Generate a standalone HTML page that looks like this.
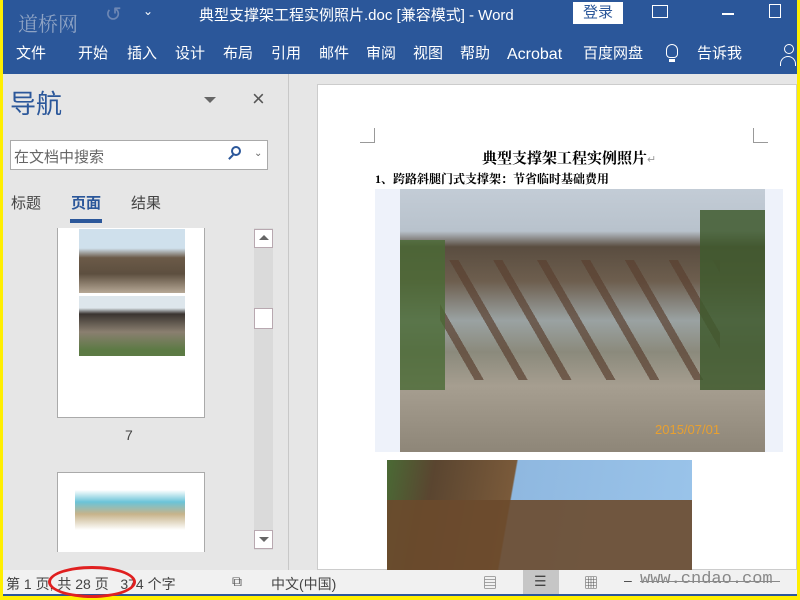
<!DOCTYPE html>
<html><head><meta charset="utf-8"><style>
*{margin:0;padding:0;box-sizing:border-box}
body{width:800px;height:600px;position:relative;overflow:hidden;background:#ffef00;font-family:"Liberation Sans","Noto Sans CJK SC",sans-serif}
.a{position:absolute}
.w{color:#fff}
.t{position:absolute;top:44px;height:20px;line-height:20px;font-size:15px;color:#fff}
</style></head><body>
<div class="a" style="left:3px;top:0;width:794px;height:74px;background:#2b579a"></div>
<div class="a w" style="left:18px;top:8px;font-size:20px;color:#8ea3c4;font-family:'Noto Serif CJK SC',serif">道桥网</div>
<div class="a w" style="left:105px;top:2px;font-size:20px;color:#6d87b4">↺</div>
<div class="a w" style="left:143px;top:4px;font-size:12px">⌄</div>
<div class="a w" style="left:199px;top:4px;font-size:15px">典型支撑架工程实例照片.doc [兼容模式]  -  Word</div>
<div class="a" style="left:573px;top:2px;width:50px;height:22px;background:#fff;color:#2b579a;font-size:15px;text-align:center;line-height:22px">登录</div>
<div class="a" style="left:652px;top:5px;width:16px;height:13px;border:1.5px solid #fff"></div>
<div class="a" style="left:722px;top:13px;width:12px;height:1.5px;background:#fff"></div>
<div class="a" style="left:769px;top:4px;width:12px;height:14px;border:1.5px solid #fff"></div>
<div class="t" style="left:16px">文件</div>
<div class="t" style="left:78px">开始</div>
<div class="t" style="left:127px">插入</div>
<div class="t" style="left:175px">设计</div>
<div class="t" style="left:223px">布局</div>
<div class="t" style="left:271px">引用</div>
<div class="t" style="left:319px">邮件</div>
<div class="t" style="left:366px">审阅</div>
<div class="t" style="left:413px">视图</div>
<div class="t" style="left:460px">帮助</div>
<div class="t" style="left:507px;top:45px;font-size:16px">Acrobat</div>
<div class="t" style="left:583px">百度网盘</div>
<div class="a" style="left:666px;top:44px;width:12px;height:14px;border:1.5px solid #fff;border-radius:6px 6px 4px 4px"></div>
<div class="a" style="left:669px;top:59px;width:6px;height:3px;background:#fff"></div>
<div class="t" style="left:697px">告诉我</div>
<div class="a" style="left:784px;top:44px;width:10px;height:10px;border:1.5px solid #fff;border-radius:50%"></div>
<div class="a" style="left:780px;top:56px;width:16px;height:10px;border:1.5px solid #fff;border-bottom:none;border-radius:8px 8px 0 0"></div>
<!-- main -->
<div class="a" style="left:3px;top:74px;width:794px;height:496px;background:#e6e6e6"></div>
<div class="a" style="left:288px;top:74px;width:1px;height:496px;background:#c8c8c8"></div>
<div class="a" style="left:10px;top:84px;font-size:26px;color:#2b579a">导航</div>
<div class="a" style="left:204px;top:97px;border-left:6px solid transparent;border-right:6px solid transparent;border-top:6px solid #666"></div>
<div class="a" style="left:252px;top:86px;font-size:22px;color:#555">×</div>
<div class="a" style="left:10px;top:140px;width:258px;height:30px;background:#fff;border:1px solid #aaa"></div>
<div class="a" style="left:14px;top:146px;font-size:15px;color:#666">在文档中搜索</div>
<div class="a" style="left:231px;top:146px;width:10px;height:10px;border:2px solid #2b579a;border-radius:50%"></div>
<div class="a" style="left:228px;top:156px;width:6px;height:2px;background:#2b579a;transform:rotate(-45deg)"></div>
<div class="a" style="left:254px;top:148px;font-size:10px;color:#666">⌄</div>
<div class="a" style="left:11px;top:192px;font-size:15px;color:#444">标题</div>
<div class="a" style="left:71px;top:192px;font-size:15px;color:#2b579a;font-weight:bold">页面</div>
<div class="a" style="left:70px;top:219px;width:32px;height:4px;background:#2b579a"></div>
<div class="a" style="left:131px;top:192px;font-size:15px;color:#444">结果</div>
<div class="a" style="left:57px;top:228px;width:148px;height:190px;background:#fff;border:1px solid #aaa;border-top:none"></div>
<div class="a" style="left:79px;top:229px;width:106px;height:64px;background:linear-gradient(#cfe0ec 0,#cfe0ec 30%,#6b5a48 45%,#5d4f3f 70%,#b6a896 100%)"></div>
<div class="a" style="left:79px;top:296px;width:106px;height:60px;background:linear-gradient(#dde6ec 0,#dde6ec 20%,#3a3430 30%,#8a7f70 60%,#5c7a44 90%)"></div>
<div class="a" style="left:125px;top:427px;font-size:14px;color:#444">7</div>
<div class="a" style="left:57px;top:472px;width:148px;height:80px;background:#fff;border:1px solid #aaa;border-bottom:none"></div>
<div class="a" style="left:75px;top:490px;width:110px;height:40px;background:linear-gradient(#fff 0,#6bc4d8 30%,#c7b38a 60%,#fff 100%)"></div>
<div class="a" style="left:254px;top:228px;width:19px;height:322px;background:#dadada"></div>
<div class="a" style="left:254px;top:229px;width:19px;height:19px;background:#fff;border:1px solid #b8a8b0"></div>
<div class="a" style="left:259px;top:235px;border-left:5px solid transparent;border-right:5px solid transparent;border-bottom:5px solid #666"></div>
<div class="a" style="left:254px;top:308px;width:19px;height:21px;background:#fff;border:1px solid #b8a8b0"></div>
<div class="a" style="left:254px;top:530px;width:19px;height:19px;background:#fff;border:1px solid #b8a8b0"></div>
<div class="a" style="left:259px;top:537px;border-left:5px solid transparent;border-right:5px solid transparent;border-top:5px solid #666"></div>
<!-- page -->
<div class="a" style="left:317px;top:84px;width:480px;height:486px;background:#fff;border:1px solid #ccc"></div>
<div class="a" style="left:360px;top:128px;width:15px;height:15px;border-right:1px solid #999;border-bottom:1px solid #999"></div>
<div class="a" style="left:753px;top:128px;width:15px;height:15px;border-left:1px solid #999;border-bottom:1px solid #999"></div>
<div class="a" style="left:482px;top:147px;font-size:15px;font-weight:bold;color:#000;font-family:'Liberation Serif','Noto Serif CJK SC',serif">典型支撑架工程实例照片<span style="color:#999;font-weight:normal;font-size:11px">↵</span></div>
<div class="a" style="left:375px;top:170px;font-size:12px;font-weight:bold;color:#000;font-family:'Liberation Serif','Noto Serif CJK SC',serif">1、跨路斜腿门式支撑架：节省临时基础费用</div>
<div class="a" style="left:375px;top:189px;width:408px;height:263px;background:#eef2fa"></div>
<div class="a" style="left:400px;top:189px;width:365px;height:263px;background:linear-gradient(#c3ccd6 0,#b8c2cc 16%,#5a4d40 22%,#6d5e4e 35%,#9aa2a2 50%,#8b8a7c 62%,#a69e90 75%,#8e8678 100%)"></div>
<div class="a" style="left:440px;top:260px;width:280px;height:120px;background:repeating-linear-gradient(60deg,transparent 0 30px,#5a4030 30px 38px);opacity:.7"></div>
<div class="a" style="left:700px;top:210px;width:65px;height:180px;background:#3f5a2e;opacity:.85"></div>
<div class="a" style="left:400px;top:240px;width:45px;height:150px;background:#4a6a35;opacity:.8"></div>
<div class="a" style="left:655px;top:422px;font-size:13px;color:#e8a030">2015/07/01</div>
<div class="a" style="left:387px;top:460px;width:305px;height:110px;background:linear-gradient(100deg,#4a6a35 0,#5a4530 15%,#7a5a3a 40%,#8fb8e0 40.5%,#9ac4ea 100%)"></div>
<div class="a" style="left:387px;top:500px;width:305px;height:70px;background:#6b4a2c;opacity:.9"></div>
<!-- status -->
<div class="a" style="left:3px;top:570px;width:794px;height:24px;background:#f1f1f1"></div>
<div class="a" style="left:3px;top:594px;width:794px;height:2px;background:#2b579a"></div>
<div class="a" style="left:6px;top:574px;font-size:14px;color:#444;white-space:pre">第 1 页, 共 28 页   374 个字</div>
<div class="a" style="left:48px;top:566px;width:88px;height:32px;border:3px solid #e02020;border-radius:50%"></div>
<div class="a" style="left:232px;top:573px;font-size:14px;color:#555">⧉</div>
<div class="a" style="left:271px;top:574px;font-size:14px;color:#444">中文(中国)</div>
<div class="a" style="left:483px;top:573px;font-size:14px;color:#555">▤</div>
<div class="a" style="left:523px;top:570px;width:36px;height:24px;background:#c6c6c6"></div>
<div class="a" style="left:534px;top:573px;font-size:14px;color:#444">☰</div>
<div class="a" style="left:584px;top:573px;font-size:14px;color:#555">▦</div>
<div class="a" style="left:624px;top:572px;font-size:14px;color:#444">–</div>
<div class="a" style="left:640px;top:570px;font-size:17px;color:#888;font-family:'Liberation Mono',monospace">www.cndao.com</div>
<div class="a" style="left:640px;top:581px;width:140px;height:1px;background:#888"></div>
</body></html>
